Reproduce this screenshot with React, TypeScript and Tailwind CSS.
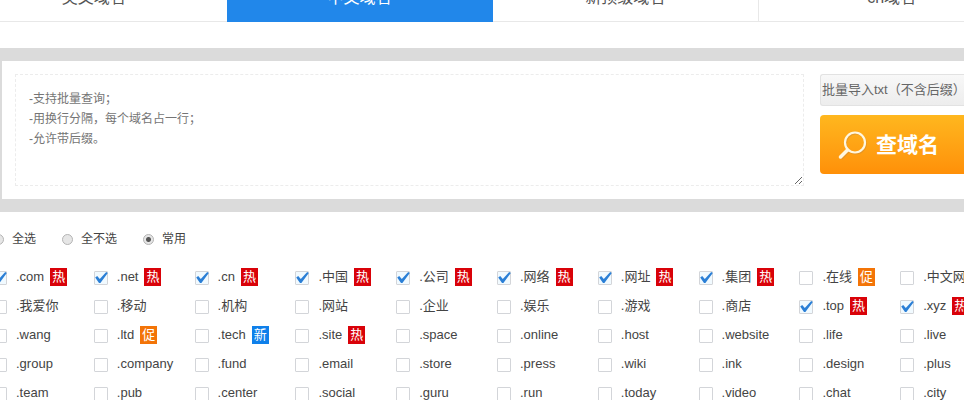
import React from "react";

type Tag = "热" | "促" | "新";
type Suffix = { name: string; checked?: boolean; tag?: Tag };

const hot = (name: string): Suffix => ({ name, checked: true, tag: "热" });

const suffixes: Suffix[] = [
  hot(".com"), hot(".net"), hot(".cn"), hot(".中国"), hot(".公司"),
  hot(".网络"), hot(".网址"), hot(".集团"), { name: ".在线", tag: "促" }, { name: ".中文网" },
  { name: ".我爱你" }, { name: ".移动" }, { name: ".机构" }, { name: ".网站" }, { name: ".企业" },
  { name: ".娱乐" }, { name: ".游戏" }, { name: ".商店" }, hot(".top"), hot(".xyz"),
  { name: ".wang" }, { name: ".ltd", tag: "促" }, { name: ".tech", tag: "新" }, { name: ".site", tag: "热" }, { name: ".space" },
  { name: ".online" }, { name: ".host" }, { name: ".website" }, { name: ".life" }, { name: ".live" },
  { name: ".group" }, { name: ".company" }, { name: ".fund" }, { name: ".email" }, { name: ".store" },
  { name: ".press" }, { name: ".wiki" }, { name: ".ink" }, { name: ".design" }, { name: ".plus" },
  { name: ".team" }, { name: ".pub" }, { name: ".center" }, { name: ".social" }, { name: ".guru" },
  { name: ".run" }, { name: ".today" }, { name: ".video" }, { name: ".chat" }, { name: ".city" },
];

const tagColor: Record<Tag, string> = {
  热: "bg-[#d90209]",
  促: "bg-[#f37407]",
  新: "bg-[#0f80ea]",
};

const tabs = ["英文域名", "中文域名", "新顶级域名", "cn域名"];
const scopes = ["全选", "全不选", "常用"];

function Tabs() {
  return (
    <nav className="-ml-[39px] -mr-[60px] grid h-[22px] grid-cols-4 border-b border-[#e8e8e8]">
      {tabs.map((tab, i) => (
        <button
          key={tab}
          type="button"
          className={
            "flex h-[22px] items-end justify-center pb-[14px] text-base leading-[20px] " +
            (i === 1
              ? "bg-[#2187ea] text-white"
              : "text-[#555] " + (i === 3 ? "border-l border-[#e8e8e8]" : ""))
          }
        >
          {tab}
        </button>
      ))}
    </nav>
  );
}

function SuffixOption({ item }: { item: Suffix }) {
  return (
    <label className="flex h-[29px] items-center whitespace-nowrap">
      <span className="relative mt-[2px] h-[14px] w-[14px] shrink-0">
        <input
          type="checkbox"
          defaultChecked={item.checked}
          className="peer block h-[14px] w-[14px] appearance-none rounded-[1px] border border-[#d3d5d9] bg-white checked:bg-[#f1faff]"
        />
        <svg
          viewBox="0 0 14 14"
          className="pointer-events-none absolute inset-0 hidden h-[14px] w-[14px] peer-checked:block"
        >
          <path d="M1.2 6.6 3.2 5 5.8 8 12.2 1 13.8 2 6.4 12 5 12Z" fill="#2b7fd6" />
        </svg>
      </span>
      <span className="ml-[9px]">{item.name}</span>
      {item.tag && (
        <span
          className={
            "ml-[6px] h-[18px] w-[17px] text-center leading-[18px] text-white " + tagColor[item.tag]
          }
        >
          {item.tag}
        </span>
      )}
    </label>
  );
}

export default function App() {
  return (
    <div className="h-screen overflow-hidden bg-white font-['Liberation_Sans','Noto_Sans_CJK_SC',sans-serif] text-[13px] text-[#444]">
      <Tabs />

      <section className="mt-[26px] bg-[#dbdbdb] pt-[13px] pb-[13px] pl-[2px]">
        <div className="flex gap-4 bg-white pt-[13px] pb-[13px] pl-[13px]">
          <textarea
            aria-label="域名"
            placeholder={"-支持批量查询；\n-用换行分隔，每个域名占一行；\n-允许带后缀。"}
            className="block h-[112px] min-w-0 flex-1 resize border border-dashed border-[#ececec] px-[13px] py-[14px] text-xs leading-[20px] placeholder:text-[#757575]"
          />
          <div className="flex w-[144px] shrink-0 flex-col gap-[9px]">
            <button
              type="button"
              className="h-8 rounded-l-[3px] border border-r-0 border-[#e2e2e2] bg-linear-to-b from-[#f8f8f8] to-[#ededed] pl-px text-left whitespace-nowrap text-[#666]"
            >
              批量导入txt（不含后缀）
            </button>
            <button
              type="button"
              className="flex h-[59px] items-center rounded-l-[4px] bg-linear-to-b from-[#ffb71e] to-[#ff9008] pl-[17px] text-[21px] font-bold text-white"
            >
              <svg viewBox="0 0 30 30" className="mr-[9px] h-[30px] w-[30px]" fill="none" strokeLinecap="round">
                <g stroke="#c98a3a" strokeOpacity="0.5" transform="translate(0.8 1)">
                  <circle cx="18" cy="12.5" r="10" strokeWidth="2" />
                  <path d="M10.5 20 4 26.5" strokeWidth="3.5" />
                </g>
                <g stroke="#fff7e0">
                  <circle cx="18" cy="12.5" r="10" strokeWidth="2.2" />
                  <path d="M10.5 20 3.5 27" strokeWidth="3.5" />
                </g>
              </svg>
              查域名
            </button>
          </div>
        </div>
      </section>

      <fieldset className="flex h-[50px] items-center gap-[26px] pt-1 text-xs">
        {scopes.map((scope, i) => (
          <label
            key={scope}
            className={"flex items-center gap-2 " + (i === 0 ? "-ml-[7px]" : "")}
          >
            <input
              type="radio"
              name="scope"
              defaultChecked={i === 2}
              className="h-[11px] w-[11px] appearance-none rounded-full border border-[#b4b4b4] bg-[#e6e6e6] checked:bg-[radial-gradient(circle,#555_0_2px,#e6e6e6_3px)]"
            />
            {scope}
          </label>
        ))}
      </fieldset>

      <div className="-ml-[7px] -mr-[37px] grid grid-cols-10">
        {suffixes.map((item) => (
          <SuffixOption key={item.name} item={item} />
        ))}
      </div>
    </div>
  );
}
